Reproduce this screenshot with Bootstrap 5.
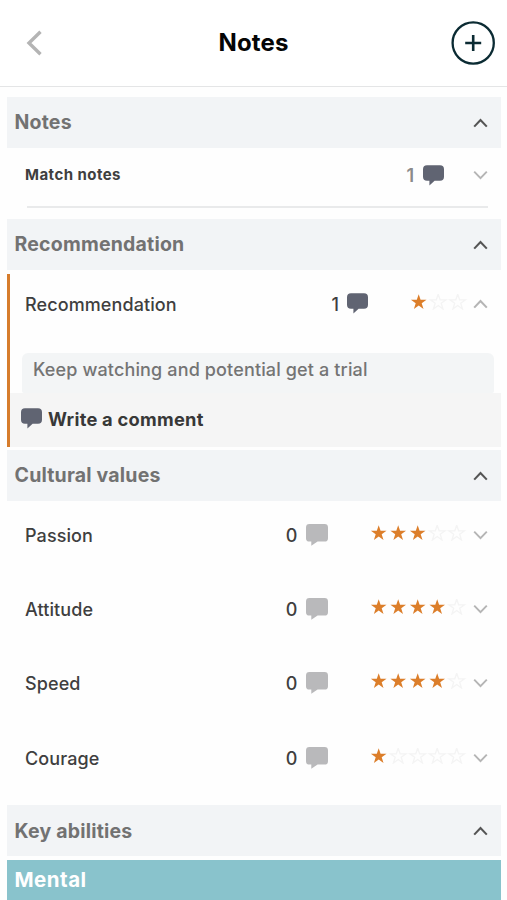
<!DOCTYPE html>
<html lang="en">
<head>
<meta charset="utf-8">
<meta name="viewport" content="width=device-width, initial-scale=1">
<title>Notes</title>
<link href="https://cdn.jsdelivr.net/npm/bootstrap@5.3.0/dist/css/bootstrap.min.css" rel="stylesheet">
<style>
  body { font-family: Inter, "Liberation Sans", sans-serif; color: #3f3f3f; background: #fefefe; height: 900px; overflow: hidden; }
  svg { display: block; flex: none; }
  .top-bar { height: 87px; border-bottom: 1.5px solid #e4e5e6; padding: 0 12px 0 26px; background: #fff; }
  .top-title { font-size: 24px; font-weight: 700; color: #050505; line-height: 1; letter-spacing: .15px; }
  .side { width: 30px; }
  .sheet { padding: 9.5px 6.5px 0 7px; }
  .section-head { height: 51.5px; background: #f2f4f6; color: #727272; padding: 0 13px 0 7.5px; font-size: 19.5px; font-weight: 700; letter-spacing: .2px; }
  .section-head span { padding-top: 1.5px; }
  .section-head svg { color: #555; margin-top: 1px; }
  .entry { height: 74.3px; padding: 0 13px 6.5px 18px; font-size: 18px; font-weight: 500; letter-spacing: .1px; }
  .entry-name { padding-top: 1px; }
  .entry-note { height: 60px; padding: 0 0 4px; margin: 0 13px 10.5px 19.5px; border-bottom: 2px solid #e9eaeb; font-size: 15px; font-weight: 700; letter-spacing: .45px; }
  .entry-note .label { margin-left: -1.5px; padding-top: 1px; }
  .count { margin-right: 8px; padding-top: 1px; }
  .note-count { font-size: 18px; font-weight: 600; color: #8b8b8b; margin-right: 8.5px; letter-spacing: 0; padding-top: 1px; }
  .note-bub { margin-right: 29px; }
  .chev { color: #b5b5b5; }
  .stars { margin: 0 6px 4px 41px; }
  .stars-short { margin-left: 40.5px; margin-right: 5px; }
  .on { fill: #dc7e2a; }
  .off { fill: none; stroke: #f4f4f4; stroke-width: 1.3; }
  .bub-dark { color: #606472; }
  .bub-light { color: #b9b9bb; }
  .open-item { border-left: 3px solid #d67c2c; height: 173.5px; margin: 3.5px 0 2.5px; }
  .open-item .entry { height: 79.5px; padding: 0 13px 19px 15px; }
  .quote { height: 39.5px; margin: 0 7px 0 12px; padding: 0 11px 7.5px; border-radius: 6px 6px 2px 2px; background: #f3f5f6; color: #747474; font-size: 18px; font-weight: 500; letter-spacing: .14px; }
  .write { background: #f5f5f5; font-size: 18.3px; font-weight: 700; color: #383838; padding: 0 0 1px 10.5px; gap: 6.5px; letter-spacing: .25px; }
  .write svg { margin-bottom: 1px; }
  .group-head { background: #89c3cc; color: #fff; height: 42px; margin-top: 3.5px; padding: 0 7.5px 1px; font-size: 20.5px; font-weight: 700; letter-spacing: .5px; }
  .gap-row { height: 6.5px; }
</style>
</head>
<body>
<svg width="0" height="0" class="position-absolute" aria-hidden="true">
  <symbol id="up" viewBox="0 0 15 10"><path d="M1.2 8.6 7.5 2l6.3 6.6" fill="none" stroke="currentColor" stroke-width="2.1"/></symbol>
  <symbol id="down" viewBox="0 0 15 10"><path d="M1.2 1.6 7.5 8.2l6.3-6.6" fill="none" stroke="currentColor" stroke-width="1.9"/></symbol>
  <symbol id="bubble" viewBox="0 0 21 21"><path d="M4 .3h13a4 4 0 0 1 4 4v7.4a4 4 0 0 1-4 4h-5.4L6.4 20.5v-4.8H4a4 4 0 0 1-4-4V4.3a4 4 0 0 1 4-4z" fill="currentColor"/></symbol>
  <symbol id="bubble-soft" viewBox="0 0 22 22"><path d="M3.4 0h15.2A3.4 3.4 0 0 1 22 3.4v10.8a3.4 3.4 0 0 1-3.4 3.4h-7L5.3 21.8v-4.2H3.4A3.4 3.4 0 0 1 0 14.2V3.4A3.4 3.4 0 0 1 3.4 0z" fill="currentColor"/></symbol>
</svg>

<header class="top-bar d-flex align-items-center justify-content-between">
  <div class="side"><svg width="17" height="26" viewBox="0 0 17 26"><path d="M14.5 1.8 3 13l11.5 11.2" fill="none" stroke="#b4b4b4" stroke-width="3.4"/></svg></div>
  <h1 class="top-title m-0">Notes</h1>
  <svg width="44" height="44" viewBox="0 0 44 44"><g fill="none" stroke="#0b2b33" stroke-width="2.3"><circle cx="22.2" cy="22" r="20.6"/><path d="M22.2 14v16M14.2 22h16" stroke-width="2.6"/></g></svg>
</header>

<main class="sheet" id="sheet"></main>

<script src="https://cdn.jsdelivr.net/npm/bootstrap@5.3.0/dist/js/bootstrap.bundle.min.js"></script>
<script>
  const icon = (id, w, h, cls = '') => `<svg width="${w}" height="${h}" class="${cls}"><use href="#${id}"/></svg>`;
  const head = t => `<div class="section-head d-flex align-items-center justify-content-between"><span>${t}</span>${icon('up', 15, 10)}</div>`;
  const starPath = 'M9.7.2 11.6 5.8H17.5L12.7 9.3 14.5 15 9.7 11.5 4.9 15 6.7 9.3 1.9 5.8H7.8z';
  const stars = (n, total) => `<svg class="stars ${total === 3 ? 'stars-short' : ''}" width="${Math.round(total * 19.5)}" height="16">${Array.from({length: total}, (_, i) => `<path d="${starPath}" transform="translate(${i * 19.5} 0)" class="${i < n ? 'on' : 'off'}"/>`).join('')}</svg>`;
  const entry = (t, n, on, total, dir) => `<div class="entry d-flex align-items-center"><span class="entry-name me-auto">${t}</span><span class="count">${n}</span>${n ? icon('bubble', 21, 21, 'bub-dark') : icon('bubble-soft', 22, 22, 'bub-light')}${stars(on, total)}${icon(dir, 15, 10, 'chev')}</div>`;
  document.getElementById('sheet').innerHTML =
    head('Notes') +
    `<div class="entry-note d-flex align-items-center"><span class="label me-auto">Match notes</span><span class="note-count">1</span>${icon('bubble', 21, 21, 'bub-dark note-bub')}${icon('down', 15, 10, 'chev')}</div>` +
    head('Recommendation') +
    `<div class="open-item d-flex flex-column">${entry('Recommendation', 1, 1, 3, 'up')}
      <div class="quote d-flex align-items-center">Keep watching and potential get a trial</div>
      <div class="write flex-grow-1 d-flex align-items-center">${icon('bubble', 21, 21, 'bub-dark')}<span>Write a comment</span></div></div>` +
    head('Cultural values') +
    [['Passion', 3], ['Attitude', 4], ['Speed', 4], ['Courage', 1]].map(([t, s]) => entry(t, 0, s, 5, 'down')).join('') +
    `<div class="gap-row"></div>` + head('Key abilities') +
    `<div class="group-head d-flex align-items-center">Mental</div>`;
</script>
</body>
</html>
